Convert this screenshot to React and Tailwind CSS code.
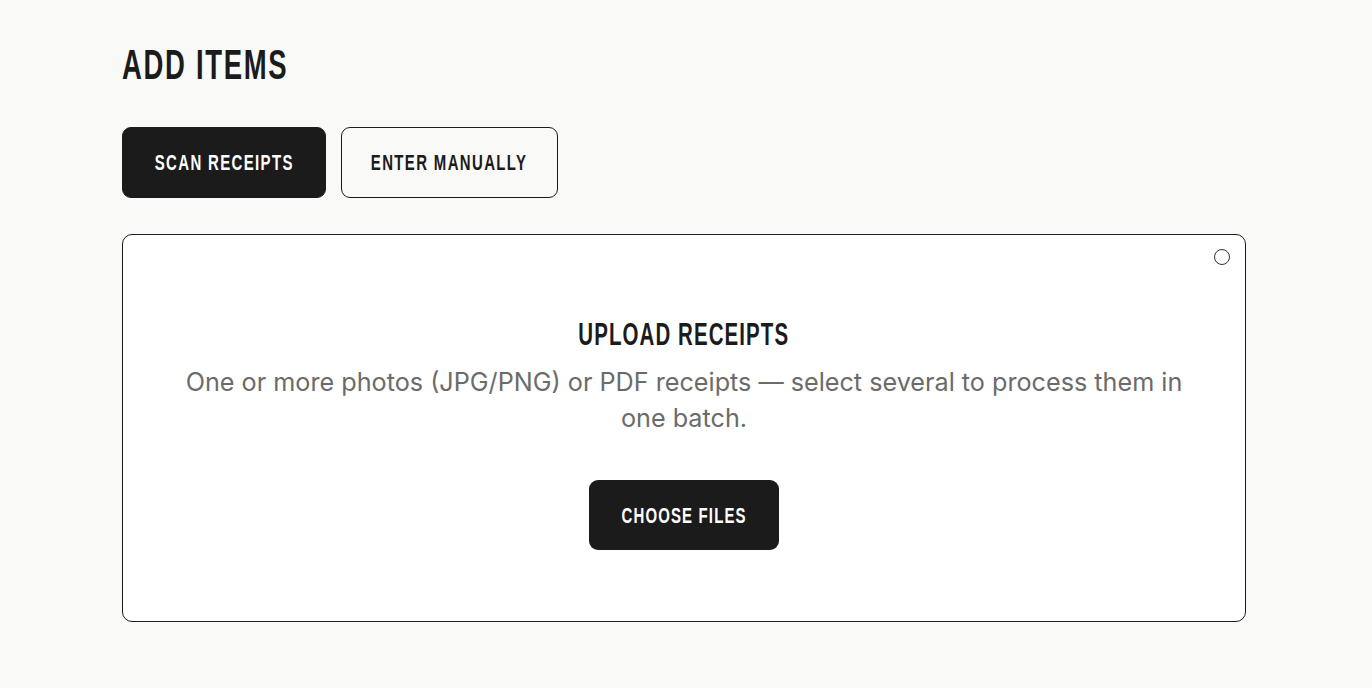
import React, { useState } from 'react';

// no condensed face is installed, so headings are Liberation Sans Bold squeezed with scale-x
const App = () => {
  const [mode, setMode] = useState('scan');

  const tabClass = (active) =>
    active
      ? 'flex h-[71px] items-center justify-center rounded-[9px] border border-[#1b1b1b] bg-[#1b1b1b] text-white'
      : 'flex h-[71px] items-center justify-center rounded-[9px] border border-[#1b1b1b] bg-transparent text-[#1b1b1b]';

  return (
    <div className="min-h-screen bg-[#f9f9f7] font-['Inter','Noto_Sans',sans-serif] text-[#1b1b1b]">
      <div className="mx-auto w-[1124px] -translate-x-[2px] pt-[38px]">
        {/* Title */}
        <h1 className="font-['Liberation_Sans',Arial,sans-serif] text-[43px] font-bold leading-[52px]">
          <span className="inline-block origin-left scale-x-[0.64] whitespace-nowrap tracking-[2.6px]">ADD ITEMS</span>
        </h1>

        {/* Mode tabs */}
        <div className="mt-[37px] flex gap-[15px] font-['Liberation_Sans',Arial,sans-serif] text-[22px] font-bold">
          <button onClick={() => setMode('scan')} className={`w-[204px] ${tabClass(mode === 'scan')}`}>
            <span className="inline-block shrink-0 scale-x-[0.68] whitespace-nowrap tracking-[2px]">SCAN RECEIPTS</span>
          </button>
          <button onClick={() => setMode('manual')} className={`w-[217px] ${tabClass(mode === 'manual')}`}>
            <span className="inline-block shrink-0 scale-x-[0.68] whitespace-nowrap tracking-[2px]">ENTER MANUALLY</span>
          </button>
        </div>

        {/* Upload panel */}
        <div className="relative mt-[36px] flex h-[388px] flex-col items-center rounded-[10px] border border-[#1b1b1b] bg-white pt-[81px]">
          <span className="absolute right-[15px] top-[14px] h-[16px] w-[16px] rounded-full border border-[#333]"></span>
          <h2 className="font-['Liberation_Sans',Arial,sans-serif] text-[32px] font-bold leading-[36px]">
            <span className="inline-block scale-x-[0.64] whitespace-nowrap tracking-[1.7px]">UPLOAD RECEIPTS</span>
          </h2>
          <p className="mt-[12px] max-w-[1010px] text-center text-[25.2px] leading-[36px] text-[#6b6b6b]">
            One or more photos (JPG/PNG) or PDF receipts — select several to process them in one batch.
          </p>
          <button className="mt-[44px] flex h-[70px] w-[190px] items-center justify-center rounded-[9px] bg-[#1b1b1b] font-['Liberation_Sans',Arial,sans-serif] text-[22px] font-bold text-white">
            <span className="inline-block shrink-0 scale-x-[0.68] whitespace-nowrap tracking-[1.7px]">CHOOSE FILES</span>
          </button>
        </div>
      </div>
    </div>
  );
};

export default App;
